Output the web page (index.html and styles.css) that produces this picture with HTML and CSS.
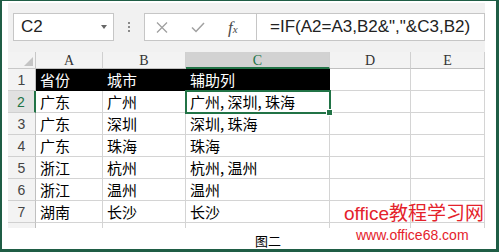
FILE: index.html
```html
<!DOCTYPE html>
<html lang="zh">
<head>
<meta charset="utf-8">
<title>图二</title>
<link rel="stylesheet" href="styles.css">
</head>
<body>
<div class="frame">
  <div class="excel">
    <div class="toolbar">
      <div class="namebox"><span class="ref">C2</span><span class="caret"></span></div>
      <div class="dots"><i></i><i></i><i></i></div>
      <div class="fbtns">
        <svg class="ico-x" width="12" height="11" viewBox="0 0 12 11"><path d="M1 0.5 L11 10.5 M11 0.5 L1 10.5" stroke="#a0a0a0" stroke-width="1.3" fill="none"/></svg>
        <svg class="ico-ok" width="14" height="11" viewBox="0 0 14 11"><path d="M1 5.5 L5 9.5 L13 1" stroke="#a0a0a0" stroke-width="1.5" fill="none"/></svg>
        <span class="fx">f<span class="fxs">x</span></span>
      </div>
      <div class="formula">=IF(A2=A3,B2&amp;","&amp;C3,B2)</div>
    </div>
    <div class="sheet">
      <div class="corner"><svg width="9" height="9" viewBox="0 0 9 9"><path d="M9 0 L9 9 L0 9 Z" fill="#c4c4c4"/></svg></div>
      <div class="ch">A</div>
      <div class="ch">B</div>
      <div class="ch on">C</div>
      <div class="ch">D</div>
      <div class="ch">E</div>

      <div class="rh">1</div>
      <div class="c blk">省份</div>
      <div class="c blk">城市</div>
      <div class="c blk">辅助列</div>
      <div class="c"></div>
      <div class="c"></div>

      <div class="rh on">2</div>
      <div class="c">广东</div>
      <div class="c">广州</div>
      <div class="c sel">广州, 深圳, 珠海</div>
      <div class="c"></div>
      <div class="c"></div>

      <div class="rh">3</div>
      <div class="c">广东</div>
      <div class="c">深圳</div>
      <div class="c">深圳, 珠海</div>
      <div class="c"></div>
      <div class="c"></div>

      <div class="rh">4</div>
      <div class="c">广东</div>
      <div class="c">珠海</div>
      <div class="c">珠海</div>
      <div class="c"></div>
      <div class="c"></div>

      <div class="rh">5</div>
      <div class="c">浙江</div>
      <div class="c">杭州</div>
      <div class="c">杭州, 温州</div>
      <div class="c"></div>
      <div class="c"></div>

      <div class="rh">6</div>
      <div class="c">浙江</div>
      <div class="c">温州</div>
      <div class="c">温州</div>
      <div class="c"></div>
      <div class="c"></div>

      <div class="rh">7</div>
      <div class="c">湖南</div>
      <div class="c">长沙</div>
      <div class="c">长沙</div>
      <div class="c"></div>
      <div class="c"></div>

      <div class="rh stub"></div>
      <div class="c stub"></div>
      <div class="c stub"></div>
      <div class="c stub"></div>
      <div class="c stub"></div>
      <div class="c stub"></div>
    </div>
  </div>
  <div class="caption">图二</div>
  <div class="wm1">office教程学习网</div>
  <div class="wm2">www.office68.com</div>
</div>
</body>
</html>
```
FILE: styles.css
```css
html, body {
  margin: 0;
  padding: 0;
  background: #fff;
}
.frame {
  position: relative;
  width: 499px;
  height: 252px;
  box-sizing: border-box;
  border-style: solid;
  border-color: #1f5d45;
  border-width: 1px 3px 3px 2px;
  padding: 2px 0 0 6px;
  background: #fff;
  font-family: "Liberation Sans", "Noto Sans CJK SC", sans-serif;
}
.excel {
  width: 477px;
}
.toolbar {
  height: 49px;
  box-sizing: border-box;
  background: #f1f1f1;
  display: flex;
  align-items: flex-start;
  padding: 10px 0 0 5px;
}
.namebox {
  width: 101px;
  height: 28px;
  box-sizing: border-box;
  border: 1px solid #c6c6c6;
  background: #fff;
  display: flex;
  align-items: center;
  padding-left: 7px;
  font-size: 17px;
  color: #222;
}
.caret {
  margin-left: auto;
  margin-right: 6px;
  width: 0;
  height: 0;
  border-left: 3.5px solid transparent;
  border-right: 3.5px solid transparent;
  border-top: 4px solid #666;
}
.dots {
  margin-left: 14px;
  height: 28px;
  display: flex;
  flex-direction: column;
  justify-content: center;
  gap: 2px;
}
.dots i {
  display: block;
  width: 2px;
  height: 2px;
  background: #8a8a8a;
}
.fbtns {
  margin-left: 14px;
  width: 112px;
  height: 28px;
  box-sizing: border-box;
  border: 1px solid #c6c6c6;
  border-right: none;
  background: #fff;
  display: flex;
  align-items: center;
  padding-left: 11px;
}
.ico-ok {
  margin-left: 23px;
}
.fx {
  margin-left: 23px;
  font-family: "Liberation Serif", serif;
  font-style: italic;
  font-size: 17px;
  color: #4a4a4a;
  line-height: 1;
}
.fxs {
  font-size: 11px;
}
.formula {
  flex: 1;
  height: 28px;
  box-sizing: border-box;
  border: 1px solid #c6c6c6;
  background: #fff;
  padding-left: 13px;
  font-size: 17px;
  line-height: 26px;
  color: #222;
}
.sheet {
  display: grid;
  grid-template-columns: 28px 67px 83px 144px 81px 74px;
  grid-template-rows: 17px repeat(7, 22px) 5px;
  background: #fff;
}
.corner {
  background: #f3f3f3;
  border-right: 1px solid #c8c8c8;
  border-bottom: 1px solid #c8c8c8;
  display: flex;
  align-items: flex-end;
  justify-content: flex-end;
  padding: 0 2px 2px 0;
  box-sizing: border-box;
}
.corner svg {
  display: block;
}
.ch {
  background: #f3f3f3;
  border-right: 1px solid #d0d0d0;
  border-bottom: 1px solid #c0c0c0;
  box-sizing: border-box;
  text-align: center;
  font-family: "Liberation Serif", serif;
  font-size: 14px;
  line-height: 17px;
  color: #333;
}
.ch.on {
  background: #d2d2d2;
  color: #217346;
  border-bottom: 2px solid #217346;
}
.rh {
  background: #f3f3f3;
  border-right: 1px solid #c0c0c0;
  border-bottom: 1px solid #d0d0d0;
  box-sizing: border-box;
  text-align: center;
  font-size: 14px;
  line-height: 22px;
  color: #444;
}
.rh.on {
  background: #e1e1e1;
  color: #217346;
  border-right: 2px solid #217346;
}
.c {
  border-right: 1px solid #d4d4d4;
  border-bottom: 1px solid #d4d4d4;
  box-sizing: border-box;
  padding-left: 4px;
  font-family: "Noto Sans CJK SC", sans-serif;
  font-size: 15px;
  line-height: 21px;
  color: #000;
  white-space: nowrap;
}
.c.blk {
  background: #000;
  color: #fff;
  border-color: #000;
}
.stub {
  border-bottom: none;
}
.rh.stub {
  border-bottom: none;
}
.sel {
  position: relative;
  outline: 2px solid #217346;
  outline-offset: -1px;
  z-index: 1;
}
.sel::after {
  content: "";
  position: absolute;
  right: -4px;
  bottom: -4px;
  width: 5px;
  height: 5px;
  background: #217346;
  border: 1px solid #fff;
}
.caption {
  margin: 5px 0 0 247px;
  font-family: "Noto Sans CJK SC", sans-serif;
  font-size: 13px;
  line-height: 16px;
  color: #000;
}
.wm1 {
  position: absolute;
  left: 342px;
  top: 201px;
  font-family: "Liberation Sans", "Noto Sans CJK SC", sans-serif;
  font-size: 19px;
  line-height: 24px;
  color: #e4222b;
  white-space: nowrap;
}
.wm2 {
  position: absolute;
  left: 354px;
  top: 226px;
  font-family: "Liberation Sans", sans-serif;
  font-size: 14px;
  line-height: 16px;
  color: #e4222b;
  white-space: nowrap;
}
```
